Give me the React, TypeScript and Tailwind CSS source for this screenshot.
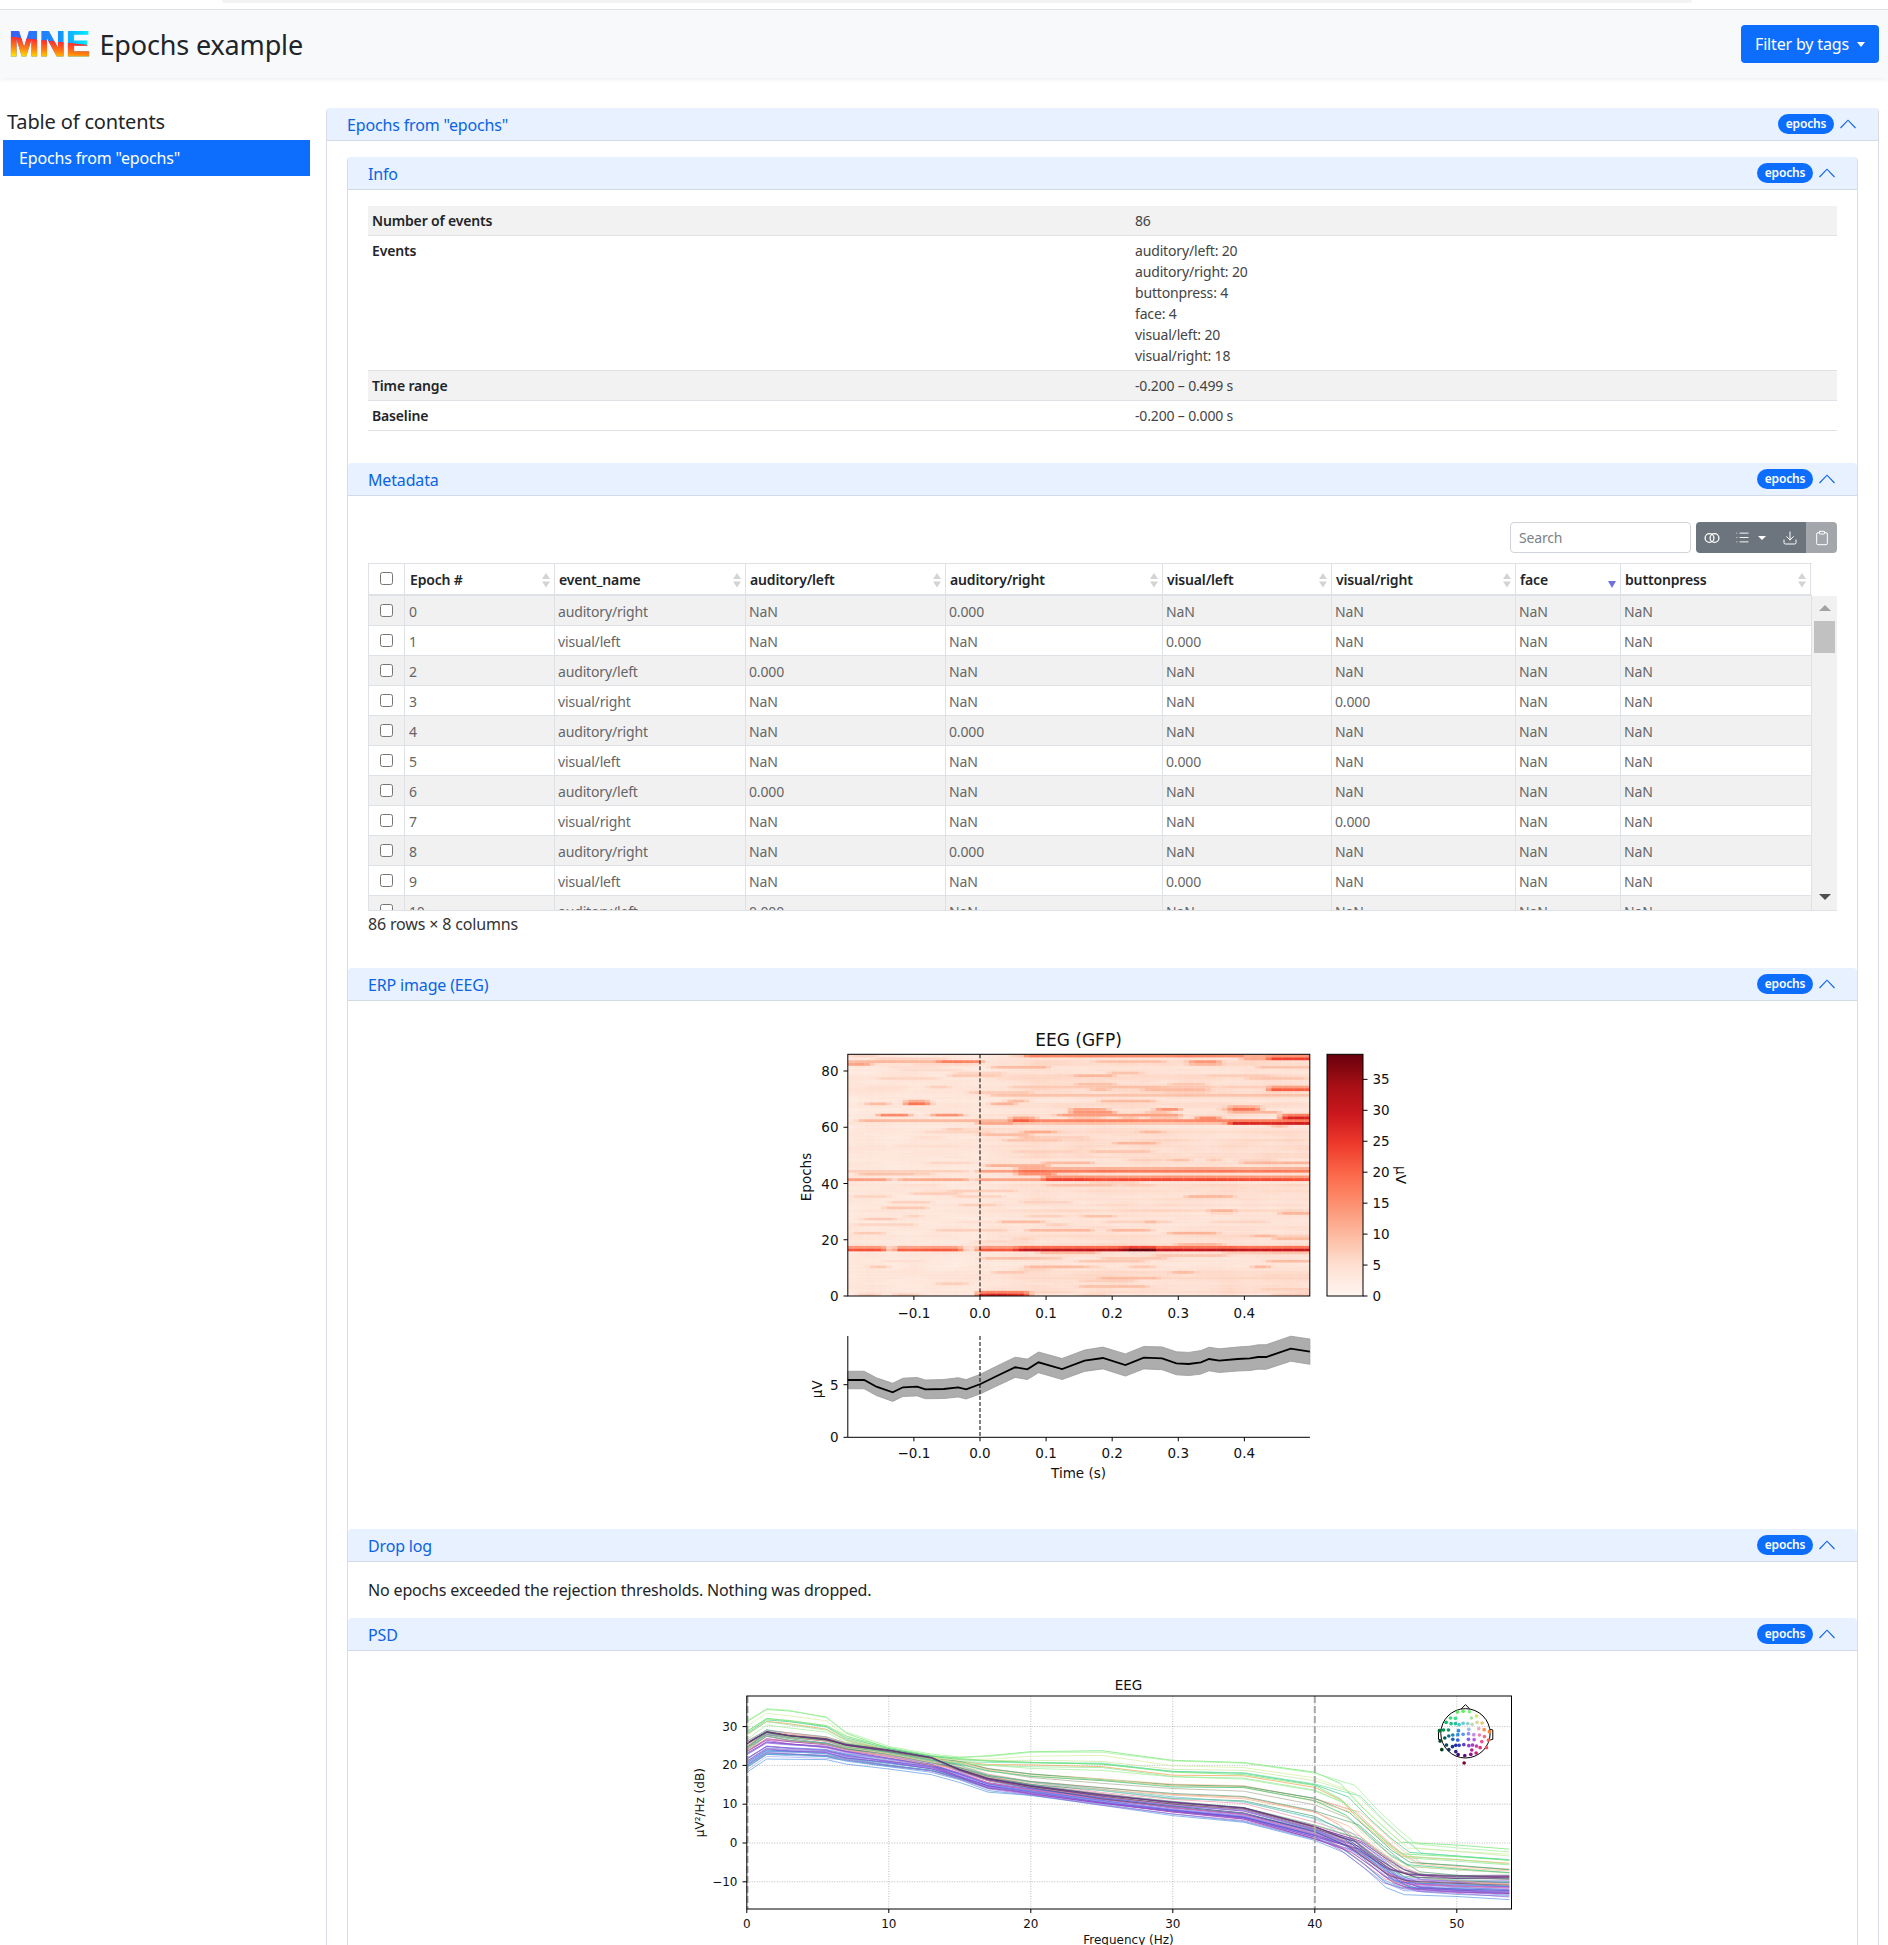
import { Download, List, Clipboard } from "lucide-react";

const rand = (seed: number) => {
  let s = seed;
  return () => {
    s = (s * 1664525 + 1013904223) % 4294967296;
    return s / 4294967296;
  };
};

const Chevron = () => (
  <svg width="16" height="10" viewBox="0 0 16 10" fill="none" stroke="#0c63e4" strokeWidth="1.1">
    <path d="M0.5 9 L8 1.2 L15.5 9" />
  </svg>
);

const AccordionHeader = ({ title }: { title: string }) => (
  <div className="flex h-[33px] items-center justify-between rounded-t border-b border-[#d3dae5] bg-[#e7f1ff] pl-5 pr-[22px] text-[#0c63e4]">
    <span className="pt-[2px]">{title}</span>
    <div className="flex items-center gap-[6px]">
      <span className="flex h-5 w-14 items-center justify-center rounded-full bg-[#0d6efd] text-xs font-semibold text-white">epochs</span>
      <Chevron />
    </div>
  </div>
);

const infoRows = [
  { label: "Number of events", values: ["86"], striped: true },
  { label: "Events", values: ["auditory/left: 20", "auditory/right: 20", "buttonpress: 4", "face: 4", "visual/left: 20", "visual/right: 18"], striped: false },
  { label: "Time range", values: ["-0.200 – 0.499 s"], striped: true },
  { label: "Baseline", values: ["-0.200 – 0.000 s"], striped: false },
];

const InfoTable = () => (
  <div className="text-sm leading-[21px] text-[#212529]">
    {infoRows.map((row) => (
      <div key={row.label} className={`grid grid-cols-[763px_1fr] border-b border-[#dee2e6] ${row.striped ? "bg-[#f2f2f2]" : ""}`}>
        <div className="px-1 py-1 font-semibold">{row.label}</div>
        <div className="py-1 pl-1 text-[#444]">
          {row.values.map((v) => (
            <div key={v}>{v}</div>
          ))}
        </div>
      </div>
    ))}
  </div>
);

const columns = ["Epoch #", "event_name", "auditory/left", "auditory/right", "visual/left", "visual/right", "face", "buttonpress"];
const cycle = ["auditory/right", "visual/left", "auditory/left", "visual/right"];
const gridCols = "grid grid-cols-[35px_150px_191px_200px_217px_169px_184px_105px_191px]";

const SortIcon = ({ active }: { active?: boolean }) =>
  active ? (
    <svg width="8" height="8" viewBox="0 0 8 8" className="absolute right-[4px] top-[17px]">
      <path d="M0 0 H8 L4 7 Z" fill="#7272dc" />
    </svg>
  ) : (
    <svg width="8" height="15" viewBox="0 0 8 15" className="absolute right-[4px] top-[9px]">
      <path d="M4 0 L8 6 H0 Z M0 8.5 H8 L4 14.5 Z" fill="#d4d4d4" />
    </svg>
  );

const MetadataTable = () => (
  <div>
    <div className="mt-[10px] flex h-[31px] justify-end gap-[5px]">
      <input
        placeholder="Search"
        className="h-[31px] w-[181px] rounded border border-[#ced4da] bg-white px-2 text-sm placeholder:text-[#7a8288]"
      />
      <div className="flex h-[31px] overflow-hidden rounded text-white">
        <div className="flex w-[110px] items-center bg-[#6c757d] pl-2">
          <svg width="16" height="12" viewBox="0 0 16 12" fill="none" stroke="white" strokeWidth="1.3">
            <circle cx="5.5" cy="6" r="4.4" />
            <circle cx="10.5" cy="6" r="4.4" />
          </svg>
          <List size={15} strokeWidth={1.5} className="ml-[15px]" />
          <span className="ml-2 h-0 w-0 border-x-[4px] border-t-[4px] border-x-transparent border-t-white" />
          <Download size={16} strokeWidth={1.5} className="ml-[16px]" />
        </div>
        <div className="flex w-[31px] items-center justify-center bg-[#a3a7ac]">
          <Clipboard size={16} strokeWidth={1.5} />
        </div>
      </div>
    </div>
    <div className="mt-[10px] flex flex-col">
      <div className={`${gridCols} mr-[25px] h-[33px] border-y border-l border-[#dee2e6] border-b-2 text-sm font-semibold text-[#212529]`}>
        <div className="flex items-start justify-center pt-[8px]">
          <input type="checkbox" className="h-[13px] w-[13px]" />
        </div>
        {columns.map((c) => (
          <div key={c} className={`relative border-l border-[#dee2e6] pt-[6px] last:border-r ${c === "Epoch #" ? "pl-[5px]" : "pl-[4px]"}`}>
            {c}
            <SortIcon active={c === "face"} />
          </div>
        ))}
      </div>
      <div className="flex h-[315px] overflow-hidden border-b border-[#dee2e6]">
        <div className="h-full w-[1444px] shrink-0 overflow-hidden border-x border-[#dee2e6]">
          {Array.from({ length: 11 }, (_, i) => {
            const ev = cycle[i % 4];
            return (
              <div key={i} className={`${gridCols} h-[30px] border-b border-[#dee2e6] text-sm text-[#666] ${i % 2 === 0 ? "bg-[#f1f1f2]" : "bg-white"}`}>
                <div className="flex items-start justify-center pt-[8px]">
                  <input type="checkbox" className="h-[13px] w-[13px]" />
                </div>
                <div className="border-l border-[#dee2e6] pl-[4px] pt-[6px]">{i}</div>
                <div className="border-l border-[#dee2e6] pl-[3px] pt-[6px]">{ev}</div>
                {["auditory/left", "auditory/right", "visual/left", "visual/right"].map((c) => (
                  <div key={c} className="border-l border-[#dee2e6] pl-[3px] pt-[6px]">
                    {c === ev ? "0.000" : "NaN"}
                  </div>
                ))}
                <div className="border-l border-[#dee2e6] pl-[3px] pt-[6px]">NaN</div>
                <div className="border-l border-[#dee2e6] pl-[3px] pt-[6px]">NaN</div>
              </div>
            );
          })}
        </div>
        {/* fake scrollbar */}
        <div className="flex w-[25px] flex-col items-center bg-[#f1f1f1] pt-[9px]">
          <span className="h-0 w-0 border-x-[6px] border-b-[6px] border-x-transparent border-b-[#a3a3a3]" />
          <div className="mt-[10px] h-[32px] w-[21px] bg-[#c1c1c1]" />
          <span className="mt-auto mb-[10px] h-0 w-0 border-x-[6px] border-t-[6px] border-x-transparent border-t-[#505050]" />
        </div>
      </div>
      <div className="mt-[1px] leading-6 text-[#333]">86 rows × 8 columns</div>
    </div>
  </div>
);

const reds: [number, number[]][] = [
  [0, [255, 245, 240]],
  [0.125, [254, 224, 210]],
  [0.25, [252, 187, 161]],
  [0.375, [252, 146, 114]],
  [0.5, [251, 106, 74]],
  [0.625, [239, 59, 44]],
  [0.75, [203, 24, 29]],
  [0.875, [165, 15, 21]],
  [1, [103, 0, 13]],
];

const redColor = (v: number) => {
  const t = Math.max(0, Math.min(1, v / 39));
  for (let i = 1; i < reds.length; i++) {
    if (t <= reds[i][0]) {
      const [t0, a] = reds[i - 1];
      const [t1, b] = reds[i];
      const f = (t - t0) / (t1 - t0);
      return `rgb(${a.map((x, k) => Math.round(x + (b[k] - x) * f)).join(",")})`;
    }
  }
  return "rgb(103,0,13)";
};

// row, t start, t end, value
const bands: [number, number, number, number][] = [
  [16, -0.2, -0.145, 22], [16, -0.125, -0.03, 21], [16, 0, 0.06, 22], [16, 0.06, 0.22, 31], [16, 0.22, 0.27, 38], [16, 0.27, 0.5, 31],
  [15, 0.44, 0.5, 9], [17, -0.2, -0.18, 14],
  [41, -0.2, -0.14, 13], [41, -0.12, -0.02, 12], [41, 0, 0.1, 13], [41, 0.1, 0.5, 23],
  [44, -0.2, -0.02, 7], [44, 0, 0.06, 13], [44, 0.06, 0.1, 19], [44, 0.1, 0.5, 18],
  [43, -0.18, -0.1, 9], [43, 0.06, 0.11, 15],
  [61, 0.0, 0.05, 12], [61, 0.05, 0.38, 9], [61, 0.38, 0.5, 28],
  [62, -0.18, 0.04, 10], [62, 0.05, 0.08, 20], [62, 0.08, 0.5, 16], [63, 0.33, 0.36, 16], [63, 0.46, 0.5, 28],
  [64, -0.15, -0.11, 16], [64, -0.07, -0.03, 15], [64, 0.12, 0.3, 13], [65, 0.14, 0.2, 14], [65, 0.38, 0.45, 11], [66, 0.14, 0.19, 12],
  [68, -0.17, -0.14, 10], [68, -0.11, -0.08, 18], [68, 0.02, 0.05, 11], [66, 0.27, 0.3, 15], [66, 0.38, 0.42, 19],
  [73, 0.44, 0.5, 21], [71, 0.02, 0.5, 9], [74, 0.05, 0.35, 8],
  [83, -0.2, -0.05, 10], [83, -0.06, 0.0, 17], [82, -0.2, -0.17, 13], [81, 0.02, 0.1, 10], [83, 0.32, 0.36, 14],
  [84, 0.4, 0.44, 12], [84, 0.44, 0.5, 24], [85, 0.07, 0.4, 16], [85, 0.4, 0.5, 12],
  [0, 0.0, 0.07, 27], [58, 0.07, 0.11, 12], [28, 0.16, 0.2, 9],
];

const heatCols = 84;
const heatRows = 86;

const heatmapCells = () => {
  const r = rand(7);
  const cells: { r: number; c: number; v: number }[] = [];
  const blobs: [number, number, number, number][] = [];
  for (let i = 0; i < 150; i++) {
    const t0 = -0.2 + r() * 0.66;
    blobs.push([Math.floor(r() * 86), t0, t0 + 0.015 + r() * 0.09, (t0 > 0 ? 6 : 5) + r() * (t0 > 0 ? 5 : 3)]);
  }
  // strong bands spill into the row above, as in the upscaled picture
  const spill = bands.filter((b) => b[3] >= 18).map(([row, t0, t1, v]): [number, number, number, number] => [row + 1, t0, t1, v * 0.62]);
  const all = [...bands, ...spill, ...blobs];
  let prev = Array.from({ length: 23 }, () => r());
  for (let row = 0; row < heatRows; row++) {
    const knots = prev.map((p) => p * 0.55 + r() * 0.45);
    prev = knots;
    const gain = r();
    for (let c = 0; c < heatCols; c++) {
      const p = (c / heatCols) * 22;
      const i = Math.floor(p);
      const n = knots[i] + (knots[i + 1] - knots[i]) * (p - i);
      const t = -0.2 + ((c + 0.5) / heatCols) * 0.699;
      const post = Math.min(1, Math.max(0, t / 0.08));
      let v = 1.6 + n * 3 + gain * 0.9 + post * (0.7 + gain * 1.3);
      for (const [br, t0, t1, val] of all) {
        if (br !== row) continue;
        const edge = Math.min(1, Math.max(0, Math.min(t - t0 + 0.012, t1 - t + 0.012) / 0.016));
        if (edge > 0) v = Math.max(v, v + (val * (0.9 + n * 0.18) - v) * edge);
      }
      cells.push({ r: row, c, v });
    }
  }
  return cells;
};

const cells = heatmapCells();

const erpKnots = [
  [165, 210], [205, 210], [235, 230], [275, 247], [300, 232], [335, 230], [355, 238], [400, 237], [435, 232], [455, 238], [490, 222], [530, 198],
  [575, 172], [605, 178], [632, 157], [690, 177], [745, 152], [790, 144], [845, 165], [890, 143], [935, 145], [970, 160], [1000, 162], [1030, 157],
  [1050, 147], [1075, 152], [1120, 147], [1150, 145], [1170, 141], [1190, 141], [1250, 116], [1297, 125],
];
const ex = (z: number) => 780 + z / 2.45;
const ey = (z: number) => 1310 + z / 3;
const bandHalf = (z: number) => 26 + ((z - 165) / 1132) * 12;
const erpMean = erpKnots.map(([x, y]) => `${ex(x).toFixed(1)},${ey(y).toFixed(1)}`).join(" ");
const erpBand = [
  ...erpKnots.map(([x, y]) => `${ex(x).toFixed(1)},${ey(y - bandHalf(x)).toFixed(1)}`),
  ...[...erpKnots].reverse().map(([x, y]) => `${ex(x).toFixed(1)},${ey(y + bandHalf(x)).toFixed(1)}`),
].join(" ");

const tx = (t: number) => 847.3 + ((t + 0.2) / 0.699) * 462;
const timeTicks = [-0.1, 0, 0.1, 0.2, 0.3, 0.4];
const tLabel = (t: number) => (t < 0 ? "−" : "") + Math.abs(t).toFixed(1);

const ErpFigure = () => (
  <svg width="640" height="480" viewBox="782.5 1025 640 480" className="mx-auto block overflow-visible tracking-normal" fontFamily="'DejaVu Sans', sans-serif" fill="#111" fontSize="13.5">
    <defs>
      <clipPath id="heatClip">
        <rect x="847.3" y="1054.3" width="462" height="241.7" />
      </clipPath>
      <filter id="soften" x="-2%" y="-2%" width="104%" height="104%">
        <feGaussianBlur stdDeviation="0.6" />
      </filter>
      <linearGradient id="redsBar" x1="0" y1="1" x2="0" y2="0">
        {reds.map(([t, c]) => (
          <stop key={t} offset={t} stopColor={`rgb(${c.join(",")})`} />
        ))}
      </linearGradient>
    </defs>
    <text x="1078" y="1046" fontSize="17" textAnchor="middle">EEG (GFP)</text>
    <g clipPath="url(#heatClip)">
      <g filter="url(#soften)">
        {cells.map((k) => (
          <rect
            key={`${k.r}-${k.c}`}
            x={847.3 + (k.c * 462) / heatCols}
            y={1296 - ((k.r + 1) * 241.7) / heatRows}
            width={462 / heatCols + 0.4}
            height={241.7 / heatRows + 0.3}
            fill={redColor(k.v)}
          />
        ))}
      </g>
    </g>
    <line x1={tx(0)} x2={tx(0)} y1="1054.3" y2="1296" stroke="#000" strokeWidth="1" strokeDasharray="4 2" />
    <rect x="847.3" y="1054.3" width="462" height="241.7" fill="none" stroke="#000" strokeWidth="1" />
    {timeTicks.map((t) => (
      <g key={t}>
        <line x1={tx(t)} x2={tx(t)} y1="1296" y2="1300" stroke="#000" />
        <text x={tx(t)} y="1317.5" textAnchor="middle">{tLabel(t)}</text>
      </g>
    ))}
    {[0, 20, 40, 60, 80].map((v) => (
      <g key={v}>
        <line x1="843" x2="847.3" y1={1296 - v * 2.8125} y2={1296 - v * 2.8125} stroke="#000" />
        <text x="838" y={1296 - v * 2.8125 + 5} textAnchor="end">{v}</text>
      </g>
    ))}
    <text transform="translate(810,1177) rotate(-90)" textAnchor="middle">Epochs</text>
    <rect x="1326.5" y="1054.3" width="36" height="241.7" fill="url(#redsBar)" stroke="#000" />
    {[0, 5, 10, 15, 20, 25, 30, 35].map((v) => (
      <g key={v}>
        <line x1="1362.5" x2="1367" y1={1296 - v * 6.19} y2={1296 - v * 6.19} stroke="#000" />
        <text x="1372" y={1296 - v * 6.19 + 5}>{v}</text>
      </g>
    ))}
    <text transform="translate(1395,1175) rotate(90)" textAnchor="middle">µV</text>

    <polygon points={erpBand} fill="#adadad" stroke="#9a9a9a" strokeWidth="0.8" />
    <polyline points={erpMean} fill="none" stroke="#000" strokeWidth="1.8" />
    <line x1={tx(0)} x2={tx(0)} y1="1336" y2="1437.3" stroke="#000" strokeWidth="1" strokeDasharray="4 2" />
    <line x1="847.3" x2="847.3" y1="1336" y2="1437.3" stroke="#000" />
    <line x1="847.3" x2="1309.4" y1="1437.3" y2="1437.3" stroke="#000" />
    {timeTicks.map((t) => (
      <g key={t}>
        <line x1={tx(t)} x2={tx(t)} y1="1437.3" y2="1441.3" stroke="#000" />
        <text x={tx(t)} y="1458" textAnchor="middle">{tLabel(t)}</text>
      </g>
    ))}
    {[[5, 1384.7], [0, 1437.3]].map(([v, y]) => (
      <g key={v}>
        <line x1="843" x2="847.3" y1={y} y2={y} stroke="#000" />
        <text x="838" y={y + 5} textAnchor="end">{v}</text>
      </g>
    ))}
    <text transform="translate(821,1389.3) rotate(-90)" textAnchor="middle">µV</text>
    <text x="1078" y="1477.5" textAnchor="middle">Time (s)</text>
  </svg>
);

const F = [0, 1.4, 3, 5.6, 7, 10, 13, 15, 17, 20, 25, 30, 35, 40, 42.5, 44, 45.5, 46.8, 50, 53.7];
const LOW = [18, 21.5, 21.5, 21.3, 20.5, 19, 17.8, 16, 13.5, 12.5, 10, 7.5, 5.5, 1, -2, -6, -11, -13, -13.5, -14.5];
const DARK = [26, 29, 28, 27, 25.5, 24, 22, 19, 16.5, 14.5, 12, 10, 8.5, 3.5, 0, -4, -7.5, -9, -9.5, -9.5];
const MID = [24, 28, 27, 26, 24.5, 23, 21, 20, 18, 16.5, 15, 13.5, 13, 9.5, 6, 1, -4, -7, -8, -9];
const TOP = [32, 35, 34.5, 33, 29, 25, 23, 22.5, 23, 24, 24.5, 22, 21.5, 19, 16, 10, 5, 0.8, 0, -1];

const px = (f: number) => 746.3 + f * 14.2;
const py = (db: number) => 1843 - db * 3.88;

const blueColors = ["#4a90e0", "#5aa0c8", "#7090f0", "#3a9ac0", "#a0a0f0", "#6aa8d8", "#4070e0"];
const purpleColors = ["#8a3fc4", "#6a50e0", "#a060d8", "#c070e0", "#9030a0", "#e070a0", "#7878f0", "#b090f0"];
const betweenColors = ["#f09070", "#5aa078", "#f090a8", "#60c0c8", "#a8a890", "#40a070", "#f0b080", "#90d8d0"];
const highColors = ["#70e870", "#a0f098", "#d6eea0", "#f5c090", "#40c888", "#f0a050", "#f0a8a8", "#70e0a8", "#30b070", "#90e898", "#c8e8a0"];

const psdLines = (() => {
  const r = rand(21);
  const out: { d: string; color: string; w: number; o: number }[] = [];
  const build = (a: number[], b: number[], u: number, spread = 1) => {
    const off = (r() - 0.5) * 1.6 * spread;
    const shift = (r() - 0.5) * 1.6;
    const tilt = (r() - 0.5) * 0.06;
    return F.map((f, i) => {
      const db = a[i] + (b[i] - a[i]) * u + off + tilt * f + (r() - 0.5) * 0.4;
      const x = f > 40 && f < 50 ? f + shift : f;
      return `${px(x).toFixed(1)},${py(db).toFixed(1)}`;
    }).join(" ");
  };
  for (let i = 0; i < 14; i++) {
    out.push({ d: build(LOW, DARK, r() * 0.4), color: blueColors[i % blueColors.length], w: 0.8, o: 0.8 });
  }
  for (let i = 0; i < 18; i++) {
    out.push({ d: build(LOW, DARK, 0.3 + r() * 0.65), color: purpleColors[i % purpleColors.length], w: 0.8, o: 0.8 });
  }
  for (let i = 0; i < 10; i++) {
    out.push({ d: build(DARK, MID, r()), color: betweenColors[i % betweenColors.length], w: 0.8, o: 0.85 });
  }
  for (let i = 0; i < 16; i++) {
    const u = Math.pow(r(), 1.5);
    out.push({ d: build(MID, TOP, i < 3 ? 1 - i * 0.07 : u), color: highColors[i % highColors.length], w: 0.8, o: 0.9 });
  }
  for (let i = 0; i < 5; i++) {
    out.push({ d: build(LOW, DARK, 0.93 + i * 0.015, 0.3), color: i % 2 ? "#7a1e86" : "#4a4a70", w: 0.9, o: 0.75 });
  }
  return out;
})();

// sensor dots in zoomed crop coordinates
const sensors: [number, number, string][] = [
  [981, 156, "#60e860"], [998, 154, "#60f060"], [1017, 155, "#80f080"], [1038, 168, "#d0e860"], [1023, 174, "#b0e0a0"], [960, 174, "#30e070"], [975, 175, "#40e090"],
  [947, 187, "#10c060"], [962, 191, "#20c080"], [975, 191, "#20c0a0"], [986, 194, "#50c8d0"], [998, 190, "#60d0d0"], [1012, 191, "#90d0d0"], [1025, 193, "#c0d8c0"], [1040, 187, "#d8d8a0"], [1055, 189, "#f0c070"],
  [927, 212, "#007030"], [939, 210, "#009050"], [954, 210, "#109070"], [984, 212, "#3090f0"], [1015, 208, "#a0b8f0"], [1045, 206, "#e8b0b0"], [1061, 209, "#f89050"], [1077, 215, "#f08030"],
  [967, 225, "#2080c0"], [955, 228, "#107090"], [982, 224, "#3090e8"], [998, 223, "#6090f0"], [1014, 221, "#9090f0"], [1030, 224, "#c090e8"], [1047, 225, "#f080b0"], [1062, 230, "#f87080"],
  [943, 234, "#006050"], [967, 238, "#2060c0"], [982, 240, "#3060e0"], [1014, 238, "#8060f0"], [1031, 239, "#b060e0"], [1054, 245, "#f05090"], [1074, 240, "#f86050"],
  [929, 243, "#004020"], [948, 255, "#005060"], [966, 260, "#203090"], [976, 256, "#2030a0"], [986, 256, "#3040c0"], [1000, 254, "#6040d0"], [1015, 257, "#9040d0"], [1026, 255, "#a040c0"], [1038, 258, "#c040b0"], [1049, 263, "#e03080"], [1068, 263, "#f05060"],
  [934, 269, "#004010"], [955, 269, "#103060"], [976, 275, "#302080"], [1024, 270, "#b020a0"], [1037, 279, "#c02080"], [983, 284, "#401080"], [1003, 287, "#601080"], [1021, 283, "#901090"], [1001, 309, "#800030"],
];

const PsdFigure = () => (
  <svg width="860" height="290" viewBox="672.5 1675 860 290" className="mx-auto block overflow-visible tracking-normal" fontFamily="'DejaVu Sans', sans-serif" fill="#111" fontSize="12">
    <defs>
      <clipPath id="psdClip">
        <rect x="746.3" y="1696" width="764.7" height="213" />
      </clipPath>
    </defs>
    <text x="1128" y="1690" fontSize="13.5" textAnchor="middle">EEG</text>
    <g stroke="#aaa" strokeWidth="0.8" strokeDasharray="1 1.5">
      {[10, 20, 30, 40, 50].map((f) => (
        <line key={f} x1={px(f)} x2={px(f)} y1="1696" y2="1909" />
      ))}
      {[30, 20, 10, 0, -10].map((d) => (
        <line key={d} x1="746.3" x2="1511" y1={py(d)} y2={py(d)} />
      ))}
    </g>
    <g clipPath="url(#psdClip)" fill="none">
      {psdLines.map((l, i) => (
        <polyline key={i} points={l.d} stroke={l.color} strokeWidth={l.w} opacity={l.o} />
      ))}
    </g>
    <line x1={px(40)} x2={px(40)} y1="1696" y2="1909" stroke="#a8a8a8" strokeWidth="2" strokeDasharray="7 3" />
    <line x1="747" x2="747" y1="1696" y2="1909" stroke="#a8a8a8" strokeWidth="2" strokeDasharray="7 3" />
    <rect x="746.3" y="1696" width="764.7" height="213" fill="none" stroke="#000" />
    {[0, 10, 20, 30, 40, 50].map((f) => (
      <g key={f}>
        <line x1={px(f)} x2={px(f)} y1="1909" y2="1913" stroke="#000" />
        <text x={px(f)} y="1928" textAnchor="middle">{f}</text>
      </g>
    ))}
    {[30, 20, 10, 0, -10].map((d) => (
      <g key={d}>
        <line x1="742" x2="746.3" y1={py(d)} y2={py(d)} stroke="#000" />
        <text x="737" y={py(d) + 4} textAnchor="end">{d < 0 ? `−${-d}` : d}</text>
      </g>
    ))}
    <text transform="translate(703,1802.7) rotate(-90)" textAnchor="middle">µV²/Hz (dB)</text>
    <text x="1128" y="1944" textAnchor="middle">Frequency (Hz)</text>
    <g transform="translate(1130,1660) scale(0.3333)">
      <circle cx="1005" cy="220" r="74" fill="none" stroke="#000" strokeWidth="3" />
      <path d="M992 147 L1005 134 L1018 147" fill="none" stroke="#000" strokeWidth="3" />
      <path d="M931 208 L924 210 L924 238 L931 240 M1079 208 L1087 210 L1087 238 L1079 240" fill="none" stroke="#000" strokeWidth="3" />
      {sensors.map(([x, y, c]) => (
        <circle key={`${x}-${y}`} cx={x} cy={y} r="5.5" fill={c} />
      ))}
    </g>
  </svg>
);

const App = () => {
  return (
    <div className="h-screen overflow-hidden bg-white font-['Noto_Sans','Open_Sans',sans-serif] text-base tracking-[-0.01em] text-[#212529]">
      {/* top strip */}
      <div className="h-[10px] border-b border-[#dee2e6] bg-white">
        <div className="ml-[222px] h-[3px] w-[1470px] rounded-b-lg bg-[#f1f3f5]" />
      </div>
      <nav className="flex h-[68px] items-center justify-between bg-[#f8f9fa] pl-[9px] pr-[9px] shadow-[0_2px_4px_rgba(0,0,0,0.06)]">
        <div className="flex items-center">
          <span className="bg-[linear-gradient(186deg,transparent_40%,#ff2f2f_42%,#ff7a10_68%,#ffe800_96%),linear-gradient(to_right,#3a5cf5,#1590ff_60%,#00f4ff)] bg-clip-text font-['Liberation_Sans',sans-serif] text-[36px] leading-[26px] font-bold tracking-[0.5px] text-transparent [-webkit-text-stroke:1px_transparent]">
            MNE
          </span>
          <span className="ml-[9px] pt-[1px] text-[27px] leading-none">Epochs example</span>
        </div>
        <button className="flex h-[38px] w-[138px] items-center justify-center gap-2 rounded bg-[#0d6efd] text-white">
          Filter by tags
          <span className="h-0 w-0 border-x-[4px] border-t-[5px] border-x-transparent border-t-white" />
        </button>
      </nav>
      <div className="flex pr-[9px] pt-[30px]">
        <aside className="w-[326px] shrink-0 pl-[3px]">
          <div className="mb-[5px] pl-1 text-xl leading-[27px]">Table of contents</div>
          <div className="flex h-9 w-[307px] items-center bg-[#0d6efd] pl-4 text-white">Epochs from "epochs"</div>
        </aside>
        <main className="min-w-0 flex-1 rounded-t border-x border-[#d9dde3]">
          <AccordionHeader title={'Epochs from "epochs"'} />
          <div className="px-5 pt-4">
            <div className="rounded-t border-x border-[#d9dde3]">
              <AccordionHeader title="Info" />
              <div className="p-5 pb-8 pt-4">
                <InfoTable />
              </div>
              <AccordionHeader title="Metadata" />
              <div className="h-[472px] px-5 pt-4">
                <MetadataTable />
              </div>
              <AccordionHeader title="ERP image (EEG)" />
              <div className="h-[528px] pt-6">
                <ErpFigure />
              </div>
              <AccordionHeader title="Drop log" />
              <div className="flex h-[56px] items-center px-5">No epochs exceeded the rejection thresholds. Nothing was dropped.</div>
              <AccordionHeader title="PSD" />
              <div className="pt-6">
                <PsdFigure />
              </div>
            </div>
          </div>
        </main>
      </div>
    </div>
  );
};

export default App;
